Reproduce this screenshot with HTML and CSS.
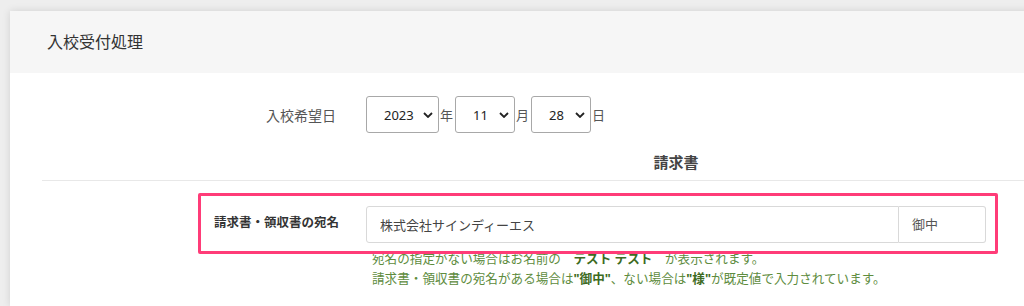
FILE: index.html
```html
<!DOCTYPE html>
<html>
<head>
  <meta charset="utf-8">
  <title>入校受付処理</title>
  <link rel="stylesheet" href="styles.css">
</head>
<body>
  <div class="card">
    <div class="card-header">入校受付処理</div>

    <div class="card-body">
      <!-- 入校希望日 -->
      <div class="form-row">
        <label class="row-label">入校希望日</label>
        <div class="controls date-controls">
          <span class="select-wrap year">
            <select><option>2023</option></select>
            <svg class="chevron" viewBox="0 0 10 6" width="10" height="6"><path d="M1 1l4 4 4-4" fill="none" stroke="#222" stroke-width="1.8"/></svg>
          </span>
          <span class="unit">年</span>
          <span class="select-wrap">
            <select><option>11</option></select>
            <svg class="chevron" viewBox="0 0 10 6" width="10" height="6"><path d="M1 1l4 4 4-4" fill="none" stroke="#222" stroke-width="1.8"/></svg>
          </span>
          <span class="unit">月</span>
          <span class="select-wrap">
            <select><option>28</option></select>
            <svg class="chevron" viewBox="0 0 10 6" width="10" height="6"><path d="M1 1l4 4 4-4" fill="none" stroke="#222" stroke-width="1.8"/></svg>
          </span>
          <span class="unit">日</span>
        </div>
      </div>

      <div class="form-row section-row">
        <span></span>
        <h3>請求書</h3>
      </div>
      <hr>

      <!-- 宛名 -->
      <div class="form-row addr-row">
        <label class="row-label bold">請求書・領収書の宛名</label>
        <div class="controls input-group">
          <input type="text" value="株式会社サインディーエス">
          <span class="addon">御中</span>
        </div>
      </div>
      <div class="form-row help-row">
        <span></span>
        <div class="help">
          <p>宛名の指定がない場合はお名前の　<b>テスト テスト</b>　が表示されます。</p>
          <p>請求書・領収書の宛名がある場合は<b>"御中"</b>、ない場合は<b>"様"</b>が既定値で入力されています。</p>
        </div>
      </div>

      <div class="highlight"></div>
    </div>
  </div>
</body>
</html>
```

FILE: styles.css
```css
:root {
  --label-col: 294px;
  --ctrl-col: 620px;
  --border: #d9d9d9;
}

html, body {
  margin: 0;
  overflow: hidden;
}

body {
  font-family: "Noto Sans", "Noto Sans CJK JP", sans-serif;
  background: #eeeeee;
  color: #333;
  padding: 11px 0 0 10px;
  height: 306px;
  box-sizing: border-box;
}

.card {
  background: #fff;
  margin-right: -30px;
  height: 295px;
  box-shadow: 0 0 8px rgba(0,0,0,0.12);
}

.card-header {
  background: #f6f6f6;
  height: 62px;
  line-height: 62px;
  padding-left: 37px;
  font-size: 16px;
  color: #333;
}

.card-body {
  position: relative;
  padding: 23px 0 0 32px;
}

.form-row {
  display: grid;
  grid-template-columns: var(--label-col) var(--ctrl-col);
  column-gap: 30px;
  align-items: center;
}

.row-label {
  text-align: right;
  font-size: 14px;
  color: #555;
}

.row-label.bold {
  font-weight: 700;
  font-size: 12.5px;
  color: #333;
  margin-right: -3px;
  padding-bottom: 6px;
}

.date-controls {
  display: flex;
  align-items: center;
}

.select-wrap {
  position: relative;
  display: inline-block;
}

.select-wrap select {
  appearance: none;
  -webkit-appearance: none;
  font-family: "Noto Sans", sans-serif;
  font-size: 13px;
  color: #222;
  background: #fff;
  border: 1px solid #a8a8a8;
  border-radius: 3px;
  height: 37px;
  width: 60px;
  padding: 0 0 0 17px;
  outline: none;
}

.select-wrap.year select {
  width: 73px;
  padding-left: 17px;
}

.chevron {
  position: absolute;
  right: 6px;
  top: 16px;
  pointer-events: none;
}

.unit {
  font-size: 13px;
  color: #555;
  margin: 0 2px 0 1px;
}

.section-row {
  margin-top: 18px;
}

.section-row h3 {
  margin: 0;
  text-align: center;
  font-size: 15px;
  line-height: 22px;
  color: #444;
  font-weight: 700;
}

hr {
  border: none;
  border-top: 1px solid #e8e8e8;
  margin: 7px 0 0 0;
}

.addr-row {
  margin-top: 25px;
}

.input-group {
  display: flex;
}

.input-group input {
  flex: 1;
  height: 37px;
  box-sizing: border-box;
  border: 1px solid var(--border);
  border-radius: 3px 0 0 3px;
  padding: 0 13px;
  font-family: "Noto Sans", "Noto Sans CJK JP", sans-serif;
  font-size: 13px;
  color: #444;
  outline: none;
}

.input-group .addon {
  width: 87px;
  height: 37px;
  box-sizing: border-box;
  border: 1px solid var(--border);
  border-left: none;
  border-radius: 0 3px 3px 0;
  padding-left: 13px;
  line-height: 35px;
  font-size: 13px;
  color: #555;
}

.help-row {
  margin-top: 6px;
}

.help {
  padding-left: 6px;
  font-size: 12.6px;
  color: #5e8c3e;
}

.help p {
  margin: 0;
  line-height: 20px;
}

.help b {
  color: #3d6b22;
}

/* annotation overlay */
.highlight {
  position: absolute;
  left: 188px;
  top: 120px;
  width: 800px;
  height: 61px;
  box-sizing: border-box;
  border: 3px solid #ff3c78;
  border-radius: 2px;
  pointer-events: none;
}
```
